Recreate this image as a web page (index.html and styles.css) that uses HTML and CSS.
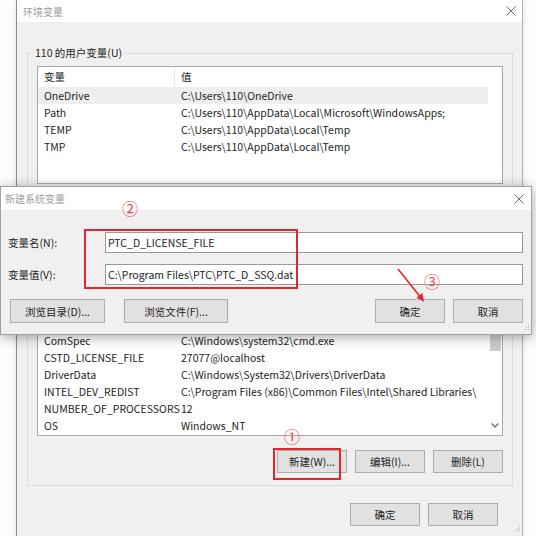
FILE: index.html
```html
<!DOCTYPE html>
<html lang="zh-CN">
<head>
    <meta charset="utf-8"/>
    <title>环境变量</title>
    <link rel="stylesheet" href="styles.css">
</head>
<body>
<div class="win">
    <div class="titlebar">
        <span class="title">环境变量</span>
        <svg class="close" width="10" height="10" viewBox="0 0 10 10"><path d="M0.5 0.5L9.5 9.5M9.5 0.5L0.5 9.5" stroke="#707070" stroke-width="1"/></svg>
    </div>
    <div class="win-body">
        <fieldset class="group user-group">
            <legend>110 的用户变量(U)</legend>
            <div class="list user-list">
                <div class="list-head"><span class="c1">变量</span><span class="c2">值</span></div>
                <div class="row selected"><span class="c1">OneDrive</span><span class="c2">C:\Users\110\OneDrive</span></div>
                <div class="row"><span class="c1">Path</span><span class="c2">C:\Users\110\AppData\Local\Microsoft\WindowsApps;</span></div>
                <div class="row"><span class="c1">TEMP</span><span class="c2">C:\Users\110\AppData\Local\Temp</span></div>
                <div class="row"><span class="c1">TMP</span><span class="c2">C:\Users\110\AppData\Local\Temp</span></div>
            </div>
            <div class="btn-row">
                <button class="btn">新建(N)...</button>
                <button class="btn">编辑(E)...</button>
                <button class="btn">删除(D)</button>
            </div>
        </fieldset>

        <!-- system variables: top part is covered by the dialog -->
        <fieldset class="group sys-group">
            <div class="list sys-list">
                <div class="sys-rows">
                    <div class="spacer"></div>
                    <div class="row"><span class="c1">ComSpec</span><span class="c2">C:\Windows\system32\cmd.exe</span></div>
                    <div class="row"><span class="c1">CSTD_LICENSE_FILE</span><span class="c2">27077@localhost</span></div>
                    <div class="row"><span class="c1">DriverData</span><span class="c2">C:\Windows\System32\Drivers\DriverData</span></div>
                    <div class="row"><span class="c1">INTEL_DEV_REDIST</span><span class="c2">C:\Program Files (x86)\Common Files\Intel\Shared Libraries\</span></div>
                    <div class="row"><span class="c1">NUMBER_OF_PROCESSORS</span><span class="c2">12</span></div>
                    <div class="row"><span class="c1">OS</span><span class="c2">Windows_NT</span></div>
                </div>
                <div class="scroll">
                    <div class="thumb"></div>
                    <svg class="arrow-down" width="8" height="5" viewBox="0 0 8 5"><path d="M0.5 0.5L4 4L7.5 0.5" fill="none" stroke="#606060" stroke-width="1.2"/></svg>
                </div>
            </div>
            <div class="btn-row">
                <button class="btn">新建(W)...</button>
                <button class="btn">编辑(I)...</button>
                <button class="btn">删除(L)</button>
            </div>
        </fieldset>

        <div class="btn-row main-row">
            <button class="btn">确定</button>
            <button class="btn">取消</button>
        </div>
    </div>
    <svg class="grip win-grip" width="8" height="8" viewBox="0 0 8 8"><g fill="#b8b8b8"><rect x="6" y="0" width="1" height="1"/><rect x="4" y="2" width="1" height="1"/><rect x="6" y="2" width="1" height="1"/><rect x="2" y="4" width="1" height="1"/><rect x="4" y="4" width="1" height="1"/><rect x="6" y="4" width="1" height="1"/></g></svg>
</div>

<div class="dialog">
    <div class="dlg-title">
        <span class="title">新建系统变量</span>
        <svg class="close" width="10" height="10" viewBox="0 0 10 10"><path d="M0.5 0.5L9.5 9.5M9.5 0.5L0.5 9.5" stroke="#707070" stroke-width="1"/></svg>
    </div>
    <div class="dlg-body">
        <div class="form">
            <label for="varName">变量名(N):</label>
            <input id="varName" type="text" value="PTC_D_LICENSE_FILE">
            <label for="varValue">变量值(V):</label>
            <input id="varValue" type="text" value="C:\Program Files\PTC\PTC_D_SSQ.dat">
        </div>
        <div class="dlg-buttons">
            <button class="btn browse-dir">浏览目录(D)...</button>
            <button class="btn browse-file">浏览文件(F)...</button>
            <span class="fill"></span>
            <button class="btn">确定</button>
            <button class="btn">取消</button>
        </div>
    </div>
    <svg class="grip dlg-grip" width="8" height="8" viewBox="0 0 8 8"><g fill="#b8b8b8"><rect x="6" y="0" width="1" height="1"/><rect x="4" y="2" width="1" height="1"/><rect x="6" y="2" width="1" height="1"/><rect x="2" y="4" width="1" height="1"/><rect x="4" y="4" width="1" height="1"/><rect x="6" y="4" width="1" height="1"/></g></svg>
</div>

<!-- red annotations -->
<div class="mark box-two"></div>
<div class="mark box-one"></div>
<span class="num num-one">①</span>
<span class="num num-two">②</span>
<span class="num num-three">③</span>
<svg class="pointer" width="36" height="40" viewBox="0 0 36 40">
    <path d="M3 4L27 34" stroke="#e2262e" stroke-width="1.6"/>
    <path d="M29 37L21.5 32.5L27.5 28Z" fill="#e2262e"/>
</svg>
</body>
</html>
```

FILE: styles.css
```css
html {
    font-family: "Noto Sans CJK SC", "Noto Sans", sans-serif;
    font-size: 10.5px;
    color: #1e1e1e;
}
body {
    margin: 0;
    height: 536px;
    overflow: hidden;
    position: relative;
    background: #fdfdfd;
}
.win {
    position: relative;
    margin-left: 16px;
    width: 505px;
    height: 540px;
    background: #f0f0f0;
    border-left: 1px solid #8c8c8c;
    border-right: 1px solid #b0b0b0;
    box-shadow: 0 0 5px rgba(0, 0, 0, 0.12);
}
.titlebar {
    height: 22px;
    background: #fff;
    display: flex;
    align-items: center;
    justify-content: space-between;
    padding: 0 6px;
}
.title {
    font-size: 10px;
    color: #a0a0a0;
}
.win-body {
    padding: 23px 9px 0 10px;
}
.group {
    margin: 0;
    border: 1px solid #dcdcdc;
    padding: 5px 9px 10px;
}
.group legend {
    padding: 0 2px;
    margin-left: -4px;
    line-height: 16px;
}
.sys-group {
    margin-top: 6px;
    padding-top: 20px;
    padding-bottom: 12px;
}
.list {
    box-sizing: border-box;
    background: #fff;
    border: 1px solid #a8a8a8;
    overflow: hidden;
}
.user-list {
    height: 118px;
}
.sys-list {
    height: 183px;
    display: flex;
}
.list-head {
    display: flex;
    width: 450px;
    height: 20px;
    line-height: 20px;
}
.list-head .c1 {
    border-right: 1px solid #e8e8e8;
    width: 130px;
    margin-right: 6px;
}
.row {
    display: flex;
    width: 450px;
    height: 17px;
    line-height: 17px;
    white-space: nowrap;
}
.row.selected {
    background: #eeeeee;
}
.c1 {
    width: 137px;
    padding-left: 6px;
    flex-shrink: 0;
}
.c2 {
    flex: 1;
}
.sys-rows {
    display: flex;
    flex-direction: column;
    width: 450px;
    padding-bottom: 1px;
}
.spacer {
    flex: 1;
}
.scroll {
    width: 14px;
    display: flex;
    flex-direction: column;
    align-items: center;
}
.thumb {
    margin-top: 81px;
    width: 11px;
    height: 16px;
    background: #cdcdcd;
}
.arrow-down {
    margin-top: auto;
    margin-bottom: 7px;
}
.btn-row {
    display: flex;
    justify-content: flex-end;
    gap: 8px;
    margin-top: 14px;
}
.user-group .btn-row {
    margin-top: 8px;
}
.btn {
    width: 70px;
    height: 23px;
    padding: 0;
    font: inherit;
    color: #1e1e1e;
    background: #e1e1e1;
    border: 1px solid #adadad;
}
.main-row {
    margin-top: 17px;
    margin-right: 15px;
}
.grip {
    position: absolute;
}
.win-grip {
    right: 1px;
    top: 526px;
}
.dialog {
    position: absolute;
    left: 0;
    top: 186px;
    width: 532px;
    height: 149px;
    box-sizing: border-box;
    background: #f0f0f0;
    border: 1px solid #a0a0a0;
    box-shadow: 0 2px 12px rgba(0, 0, 0, 0.35);
}
.dlg-title {
    height: 23px;
    background: #fff;
    display: flex;
    align-items: center;
    justify-content: space-between;
    padding: 0 7px 0 4px;
}
.dlg-body {
    padding: 22px 8px 0 7px;
}
.form {
    display: grid;
    grid-template-columns: 97px 1fr;
    row-gap: 11px;
    align-items: center;
}
.form label {
    justify-self: start;
}
.form input {
    box-sizing: border-box;
    height: 21px;
    margin: 0;
    padding: 0 2px;
    font: inherit;
    color: #1e1e1e;
    border: 1px solid #9a9a9a;
    background: #fff;
    outline: none;
}
.dlg-buttons {
    display: flex;
    gap: 8px;
    margin-top: 14px;
    padding-left: 2px;
    height: 24px;
}
.dlg-buttons .btn {
    height: 24px;
}
.browse-dir {
    width: 95px;
    margin-right: 11px;
}
.browse-file {
    width: 104px;
}
.fill {
    flex: 1;
}
.dlg-grip {
    right: 1px;
    bottom: 1px;
}
.mark {
    position: absolute;
    border: 2px solid #e2262e;
    box-sizing: border-box;
}
.box-two {
    left: 84px;
    top: 229px;
    width: 214px;
    height: 60px;
}
.box-one {
    left: 273px;
    top: 448px;
    width: 68px;
    height: 32px;
}
.num {
    position: absolute;
    width: 20px;
    height: 20px;
    line-height: 20px;
    text-align: center;
    font-size: 16px;
    color: #e8464e;
}
.num-one {
    left: 282px;
    top: 426px;
}
.num-two {
    left: 120px;
    top: 198px;
}
.num-three {
    left: 422px;
    top: 271px;
}
.pointer {
    position: absolute;
    left: 395px;
    top: 265px;
}
```
